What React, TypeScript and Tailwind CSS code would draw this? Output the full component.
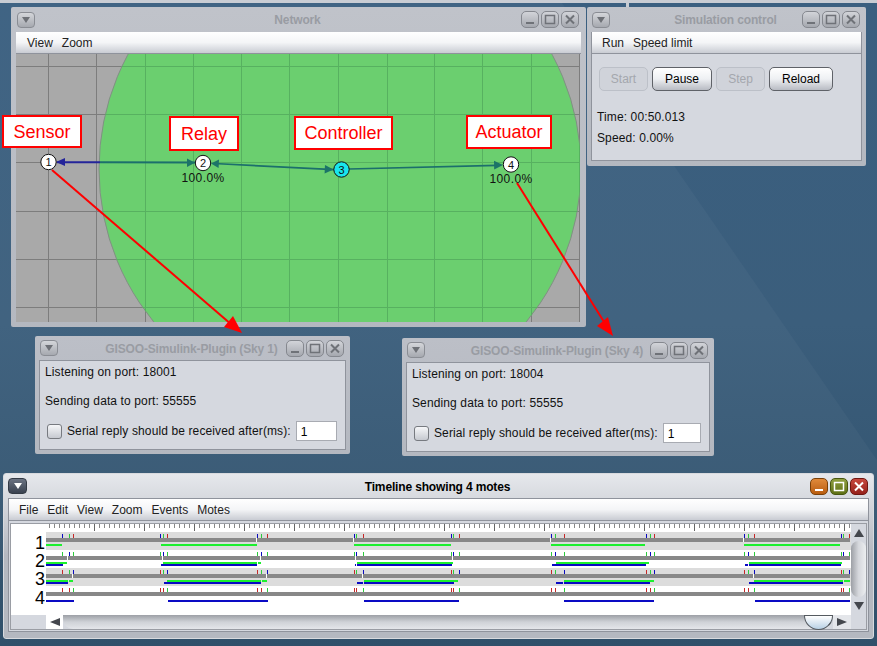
import React from "react";

const FONT = "font-['Liberation_Sans',Arial,sans-serif]";

function MenuBtn({ active }: { active?: boolean }) {
  return (
    <div
      className={
        "h-[16px] rounded-[4px] border flex items-center justify-center " +
        (active
          ? "w-[19px] border-[#333a44] bg-gradient-to-b from-[#6b7382] to-[#3a4250]"
          : "w-[18px] border-[#8a8d94] bg-gradient-to-b from-[#d4d6da] to-[#a6a9b0]")
      }
    >
      <svg width="8" height="6" viewBox="0 0 8 6">
        <path d="M0 0 H8 L4 6 Z" fill={active ? "#ffffff" : "#6d7076"} />
      </svg>
    </div>
  );
}

function CtrlBtn({ kind, active }: { kind: "min" | "max" | "close"; active?: boolean }) {
  const c = active ? "#ffffff" : "#6f7278";
  const cls = active
    ? kind === "min"
      ? "border-[#7a4008] bg-gradient-to-b from-[#e08a3a] to-[#b85c0c]"
      : kind === "max"
        ? "border-[#47560f] bg-gradient-to-b from-[#90a040] to-[#5f7014]"
        : "border-[#6e1510] bg-gradient-to-b from-[#c8483e] to-[#95201a]"
    : "border-[#85888f] bg-gradient-to-b from-[#d2d4d9] to-[#a5a8af]";
  return (
    <div className={"w-[18px] h-[17px] rounded-[5px] border flex items-center justify-center " + cls}>
      <svg width="12" height="11" viewBox="0 0 12 11">
        {kind === "min" && <rect x="2" y="8" width="8" height="2" fill={c} />}
        {kind === "max" && <rect x="1.5" y="1.5" width="9" height="8" fill="none" stroke={c} strokeWidth="1.5" />}
        {kind === "close" && <path d="M2 1.5 L10 9.5 M10 1.5 L2 9.5" stroke={c} strokeWidth="2" fill="none" />}
      </svg>
    </div>
  );
}

function TitleBar({ title, active, tall }: { title: string; active?: boolean; tall?: boolean }) {
  return (
    <div
      className={
        "relative flex items-center justify-between shrink-0 " +
        (tall ? "h-[25px] " : "h-[24px] ") +
        (active ? "pl-0 pr-[1px]" : "pl-[1px] pr-[2px]")
      }
    >
      <MenuBtn active={active} />
      <div
        className={
          "absolute left-0 right-[2px] top-[2px] h-[22px] leading-[22px] text-center text-[12px] font-bold tracking-[-0.15px] pointer-events-none " +
          (active ? "text-black" : "text-[#999ca3]")
        }
      >
        {title}
      </div>
      <div className="flex gap-[2px]">
        <CtrlBtn kind="min" active={active} />
        <CtrlBtn kind="max" active={active} />
        <CtrlBtn kind="close" active={active} />
      </div>
    </div>
  );
}

function MenuBar({ items, pl }: { items: string[]; pl: string }) {
  return (
    <div
      className={
        "h-[22px] shrink-0 flex items-center gap-[9px] text-[12px] text-[#222] bg-gradient-to-b from-white via-[#f4f5f7] to-[#c9ccd3] border-b border-[#8f939c] " +
        pl
      }
    >
      {items.map((m) => (
        <span key={m}>{m}</span>
      ))}
    </div>
  );
}

function PushButton({ label, disabled, w }: { label: string; disabled?: boolean; w: string }) {
  return (
    <div
      className={
        "h-[24px] flex items-center justify-center rounded-[5px] border text-[12px] " +
        w +
        (disabled
          ? " border-[#bcc0c8] bg-[#d0d3da] text-[#a4a7ad]"
          : " border-[#5f6268] bg-gradient-to-b from-white via-[#eef0f3] to-[#b8bbc3] text-black")
      }
    >
      {label}
    </div>
  );
}

function PluginBody({ port, inputW }: { port: string; inputW: string }) {
  return (
    <div className="flex-1 flex flex-col border border-[#8f939c] bg-[#d5d8df] text-[12px] tracking-[0.12px] text-[#111] pl-[5px]">
      <div className="h-[20px] leading-[20px] mt-[1px]">Listening on port: {port}</div>
      <div className="h-[20px] leading-[20px] mt-[9px]">Sending data to port: 55555</div>
      <div className="flex items-center mt-[10px] pl-[2px]">
        <div className="w-[15px] h-[15px] rounded-[3px] border border-[#777a80] bg-gradient-to-b from-[#f6f7f9] to-[#c6c9d0]" />
        <span className="ml-[5px]">Serial reply should be received after(ms):</span>
        <div className={"h-[20px] ml-[5px] bg-white border border-[#a8abb2] text-[12px] leading-[20px] pl-[4px] text-black " + inputW}>
          1
        </div>
      </div>
    </div>
  );
}

const VLINES = [48, 96, 145, 193, 241, 289, 338, 387, 434, 482, 531, 579];
const HLINES = [66, 114, 162, 211, 259, 307];

function NetworkCanvas() {
  return (
    <svg className="block w-[564px] h-[268px]" viewBox="16 54 564 268">
      <defs>
        <clipPath id="circ">
          <circle cx="340" cy="169" r="241" />
        </clipPath>
      </defs>
      <rect x="16" y="54" width="564" height="268" fill="#a9a9a9" />
      {VLINES.map((x) => (
        <line key={x} x1={x + 0.5} x2={x + 0.5} y1="54" y2="322" stroke="#7d7d7d" />
      ))}
      {HLINES.map((y) => (
        <line key={y} x1="16" x2="580" y1={y + 0.5} y2={y + 0.5} stroke="#7d7d7d" />
      ))}
      <circle cx="340" cy="169" r="241" fill="#6bcf6f" stroke="#828f84" strokeWidth="1" />
      <g clipPath="url(#circ)">
        {VLINES.map((x) => (
          <line key={x} x1={x + 0.5} x2={x + 0.5} y1="54" y2="322" stroke="#57b160" />
        ))}
        {HLINES.map((y) => (
          <line key={y} x1="16" x2="580" y1={y + 0.5} y2={y + 0.5} stroke="#57b160" />
        ))}
      </g>
      <line x1="57" y1="162.2" x2="100" y2="162.2" stroke="#24249a" strokeWidth="2" />
      <line x1="100" y1="162.2" x2="196" y2="162.6" stroke="#1c6f6c" strokeWidth="2" />
      <path d="M56 162 L65 158 V166 Z" fill="#24249a" />
      <path d="M195 162.8 L187 158.5 V167 Z" fill="#1c7468" />
      <line x1="214" y1="163.5" x2="334" y2="169.6" stroke="#1c6f6c" strokeWidth="1.7" />
      <path d="M211 163.6 L219 159.6 L218.6 168 Z" fill="#1c7468" />
      <path d="M333.5 169.5 L325 165 L324.6 173.6 Z" fill="#1c7468" />
      <line x1="349" y1="169" x2="497" y2="165.4" stroke="#1c6f6c" strokeWidth="1.7" />
      <path d="M503 165 L494 160.8 L494.2 169.4 Z" fill="#1c7468" />
      {[
        { x: 48.5, y: 162, n: "1", f: "#ffffff" },
        { x: 203, y: 163, n: "2", f: "#ffffff" },
        { x: 341.5, y: 169.5, n: "3", f: "#19e6ee" },
        { x: 511, y: 164.5, n: "4", f: "#ffffff" },
      ].map((d) => (
        <g key={d.n}>
          <circle cx={d.x} cy={d.y} r="7.7" fill={d.f} stroke="#111" strokeWidth="1" />
          <text x={d.x} y={d.y + 4} textAnchor="middle" fontSize="11" fill="#111" fontFamily="'Liberation Sans', sans-serif">
            {d.n}
          </text>
        </g>
      ))}
      <text x="203" y="181.5" textAnchor="middle" fontSize="12" letterSpacing="0.4" fill="#111" fontFamily="'Liberation Sans', sans-serif">
        100.0%
      </text>
      <text x="511" y="183" textAnchor="middle" fontSize="12" letterSpacing="0.4" fill="#111" fontFamily="'Liberation Sans', sans-serif">
        100.0%
      </text>
    </svg>
  );
}

type Seg = [number, number];
const B = "#0a0ac0";
const G = "#2ccb3c";
const R = "#c62828";
const TX = [62, 160, 257, 354, 451, 551, 646, 744, 840];
const OFF = [
  [0, 6.5, 11],
  [0, 3, 7],
  [0, 4, 10],
  [0, 2, 9],
  [0, 2, 8],
  [0, 4, 13],
  [0, 4, 8],
  [0, 4, 10],
  [1, 3, 9],
];
const ROWS: {
  top: number;
  bg: string;
  colors: string[];
  gaps: number[];
  green: Seg[];
  blue: Seg[];
  greenY: number;
  blueY: number;
}[] = [
  {
    top: 532,
    bg: "#dcdcdc",
    colors: [B, G, R],
    gaps: [256, 353, 550, 743],
    green: [[46, 62], [161, 257], [354, 451], [551, 645], [744, 840]],
    blue: [],
    greenY: 12,
    blueY: 0,
  },
  {
    top: 550,
    bg: "#ffffff",
    colors: [G, B, G],
    gaps: [67, 162, 260, 355, 452],
    green: [[46, 67], [163, 257], [258, 261], [357, 453], [556, 649], [749, 842]],
    blue: [[46, 63], [161, 257], [355, 356], [357, 452], [552, 646], [745, 748], [749, 841]],
    greenY: 12,
    blueY: 14,
  },
  {
    top: 568,
    bg: "#dcdcdc",
    colors: [R, G, B],
    gaps: [72, 266, 362, 753],
    green: [[46, 68], [69, 73], [167, 261], [262, 267], [364, 458], [564, 654], [754, 843], [844, 850]],
    blue: [[46, 68], [164, 261], [357, 363], [364, 454], [556, 563], [564, 650], [749, 843]],
    greenY: 12,
    blueY: 14,
  },
  {
    top: 586,
    bg: "#ffffff",
    colors: [R, R, G],
    gaps: [],
    green: [],
    blue: [[46, 74], [168, 268], [364, 459], [564, 654], [755, 850]],
    greenY: 0,
    blueY: 14,
  },
];

function TimelineCanvas() {
  const minor: number[] = [];
  for (let x = 49; x < 851; x += 5) minor.push(x);
  return (
    <svg className="block w-[840px] h-[91px]" viewBox="11 524 840 91" shapeRendering="crispEdges">
      <rect x="11" y="524" width="840" height="91" fill="#ffffff" />
      {minor.map((x) => {
        const major = (x - 44) % 50 === 0;
        return <rect key={x} x={x} y="524" width="1" height={major ? 7 : 4} fill={major ? "#666" : "#888"} />;
      })}
      {ROWS.map((r, i) => (
        <g key={i}>
          <rect x="46" y={r.top} width="805" height="18" fill={r.bg} />
          <rect x="46" y={r.top + 6} width="804" height="4" fill="#888888" />
          {r.gaps.map((g) => (
            <rect key={g} x={g} y={r.top + 6} width="1" height="4" fill="#ffffff" />
          ))}
          {TX.map((x, k) =>
            OFF[k].map((o, j) => (
              <rect key={k + "-" + j} x={Math.round(x + o)} y={r.top + 2} width="1" height="4" fill={r.colors[j]} />
            )),
          )}
          {r.green.map((s) => (
            <rect key={s[0]} x={s[0]} y={r.top + r.greenY} width={s[1] - s[0]} height="2" fill="#1cf02e" />
          ))}
          {r.blue.map((s) => (
            <rect key={s[0]} x={s[0]} y={r.top + r.blueY} width={s[1] - s[0]} height="2" fill="#0a0ac4" />
          ))}
        </g>
      ))}
      {[
        { n: "1", y: 549 },
        { n: "2", y: 567 },
        { n: "3", y: 585 },
        { n: "4", y: 604 },
      ].map((d) => (
        <text key={d.n} x="45" y={d.y} textAnchor="end" fontSize="18" fill="#000" shapeRendering="auto" fontFamily="'Liberation Sans', sans-serif">
          {d.n}
        </text>
      ))}
    </svg>
  );
}

function Arrow({ dir }: { dir: "up" | "down" | "left" | "right" }) {
  const d = { up: "M0 8 L5 0 L10 8 Z", down: "M0 0 L10 0 L5 8 Z", left: "M10 0 V8 L0 4 Z", right: "M0 0 V8 L10 4 Z" }[dir];
  return (
    <svg width="10" height="8" viewBox="0 0 10 8">
      <path d={d} fill="#44474d" />
    </svg>
  );
}

export default function App() {
  return (
    <div className={"relative w-[877px] h-[646px] overflow-hidden bg-gradient-to-b from-[#3a5f80] via-[#3b5e7c] to-[#30506a] " + FONT}>
      <div className="h-[3px] bg-[#c8ccd3]" />
      <svg className="absolute left-0 top-0 w-[877px] h-[646px]" viewBox="0 0 877 646">
        <path d="M560 0 L675 167 L877 460 V560 H0 V0 Z" fill="#ffffff" opacity="0.03" />
        <rect x="626" y="3" width="3" height="4" fill="#c8ccd3" />
      </svg>

      {/* Network */}
      <div className="absolute left-[11px] top-[7px] w-[575px] h-[320px] flex flex-col px-[5px] pb-[5px] bg-gradient-to-b from-[#c0c3ca] to-[#b4b8c0] rounded-[2px]">
        <TitleBar title="Network" tall />
        <div className="flex-1 flex flex-col min-h-0">
          <MenuBar items={["View", "Zoom"]} pl="pl-[11px]" />
          <NetworkCanvas />
        </div>
      </div>

      {/* Simulation control */}
      <div className="absolute left-[587px] top-[7px] w-[279px] h-[159px] flex flex-col px-[4px] pb-[5px] bg-gradient-to-b from-[#c0c3ca] to-[#b4b8c0] rounded-[2px]">
        <TitleBar title="Simulation control" tall />
        <div className="flex-1 flex flex-col border-x border-b border-[#8f939c] bg-[#d5d8df]">
          <MenuBar items={["Run", "Speed limit"]} pl="pl-[10px]" />
          <div className="flex gap-[4px] pl-[7px] pt-[13px]">
            <PushButton label="Start" disabled w="w-[49px]" />
            <PushButton label="Pause" w="w-[60px]" />
            <PushButton label="Step" disabled w="w-[49px]" />
            <PushButton label="Reload" w="w-[64px]" />
          </div>
          <div className="pl-[5px] pt-[16px] text-[12px] tracking-[0.12px] leading-[21px] text-[#111]">
            <div>Time: 00:50.013</div>
            <div>Speed: 0.00%</div>
          </div>
        </div>
      </div>

      {/* Plugin 1 */}
      <div className="absolute left-[35px] top-[336px] w-[315px] h-[118px] flex flex-col px-[4px] pb-[4px] bg-gradient-to-b from-[#bcbfc7] to-[#b4b8c0] rounded-[2px]">
        <TitleBar title="GISOO-Simulink-Plugin (Sky 1)" />
        <PluginBody port="18001" inputW="w-[41px]" />
      </div>

      {/* Plugin 2 */}
      <div className="absolute left-[402px] top-[338px] w-[312px] h-[118px] flex flex-col px-[4px] pb-[4px] bg-gradient-to-b from-[#bcbfc7] to-[#b4b8c0] rounded-[2px]">
        <TitleBar title="GISOO-Simulink-Plugin (Sky 4)" />
        <PluginBody port="18004" inputW="w-[38px]" />
      </div>

      {/* Timeline */}
      <div className="absolute left-[3px] top-[473px] w-[871px] h-[166px] flex flex-col px-[4px] pb-[6px] bg-gradient-to-b from-[#e6e8ec] via-[#b4b8c0] to-[#b4b8c0] rounded-[3px] border border-[#d8dade]">
        <TitleBar title="Timeline showing 4 motes" active />
        <div className="flex-1 flex flex-col border border-[#8f939c] bg-[#d5d8df]">
          <MenuBar items={["File", "Edit", "View", "Zoom", "Events", "Motes"]} pl="pl-[10px]" />
          <div className="flex-1 pt-[2px] pl-[1px] pr-[1px] pb-[1px] flex flex-col">
            <div className="flex-1 border border-[#9a9da4] flex flex-col">
              <div className="flex h-[91px]">
                <TimelineCanvas />
                <div className="w-[15px] flex flex-col bg-[#d5d8df]">
                  <div className="h-[17px] flex items-center justify-center">
                    <Arrow dir="up" />
                  </div>
                  <div className="h-[56px] rounded-[10px] bg-gradient-to-r from-[#9da0a6] via-[#d5d7dc] to-[#eceef0]" />
                  <div className="h-[18px] flex items-center justify-center">
                    <Arrow dir="down" />
                  </div>
                </div>
              </div>
              <div className="flex flex-1">
                <div className="w-[35px] bg-[#d5d8df]" />
                <div className="w-[17px] bg-white flex items-center justify-center">
                  <Arrow dir="left" />
                </div>
                <div className="w-[770px] rounded-b-[10px] bg-gradient-to-b from-[#9da0a6] via-[#cfd2d7] to-[#e4e6ea] relative">
                  <div className="absolute right-0 top-0 w-[29px] h-[15px] rounded-b-full border border-[#555a60] bg-gradient-to-b from-[#ffffff] to-[#b8d0e4]" />
                </div>
                <div className="w-[18px] bg-[#e4e6ea] flex items-center justify-center">
                  <Arrow dir="right" />
                </div>
                <div className="flex-1 bg-[#d5d8df]" />
              </div>
            </div>
          </div>
        </div>
      </div>

      {/* Callout labels */}
      <div className="absolute left-[2px] top-[115px] w-[80px] h-[33px] pt-[1px] border-2 border-[#ff0000] bg-white text-[#ff0000] text-[18px] flex items-center justify-center">Sensor</div>
      <div className="absolute left-[169px] top-[116px] w-[70px] h-[35px] pt-[1px] border-2 border-[#ff0000] bg-white text-[#ff0000] text-[18px] flex items-center justify-center">Relay</div>
      <div className="absolute left-[294px] top-[116px] w-[99px] h-[34px] border-2 border-[#ff0000] bg-white text-[#ff0000] text-[18px] flex items-center justify-center">Controller</div>
      <div className="absolute left-[466px] top-[115px] w-[86px] h-[34px] border-2 border-[#ff0000] bg-white text-[#ff0000] text-[18px] flex items-center justify-center">Actuator</div>

      {/* Red arrows */}
      <svg className="absolute left-0 top-0 w-[877px] h-[646px] pointer-events-none" viewBox="0 0 877 646">
        <line x1="52" y1="170" x2="232" y2="325" stroke="#ff0000" strokeWidth="2" />
        <path d="M242 333 L224 327 L233 316 Z" fill="#ff0000" />
        <line x1="517" y1="183" x2="606" y2="325" stroke="#ff0000" strokeWidth="2" />
        <path d="M613 336 L597 326 L608 317 Z" fill="#ff0000" />
      </svg>
    </div>
  );
}
